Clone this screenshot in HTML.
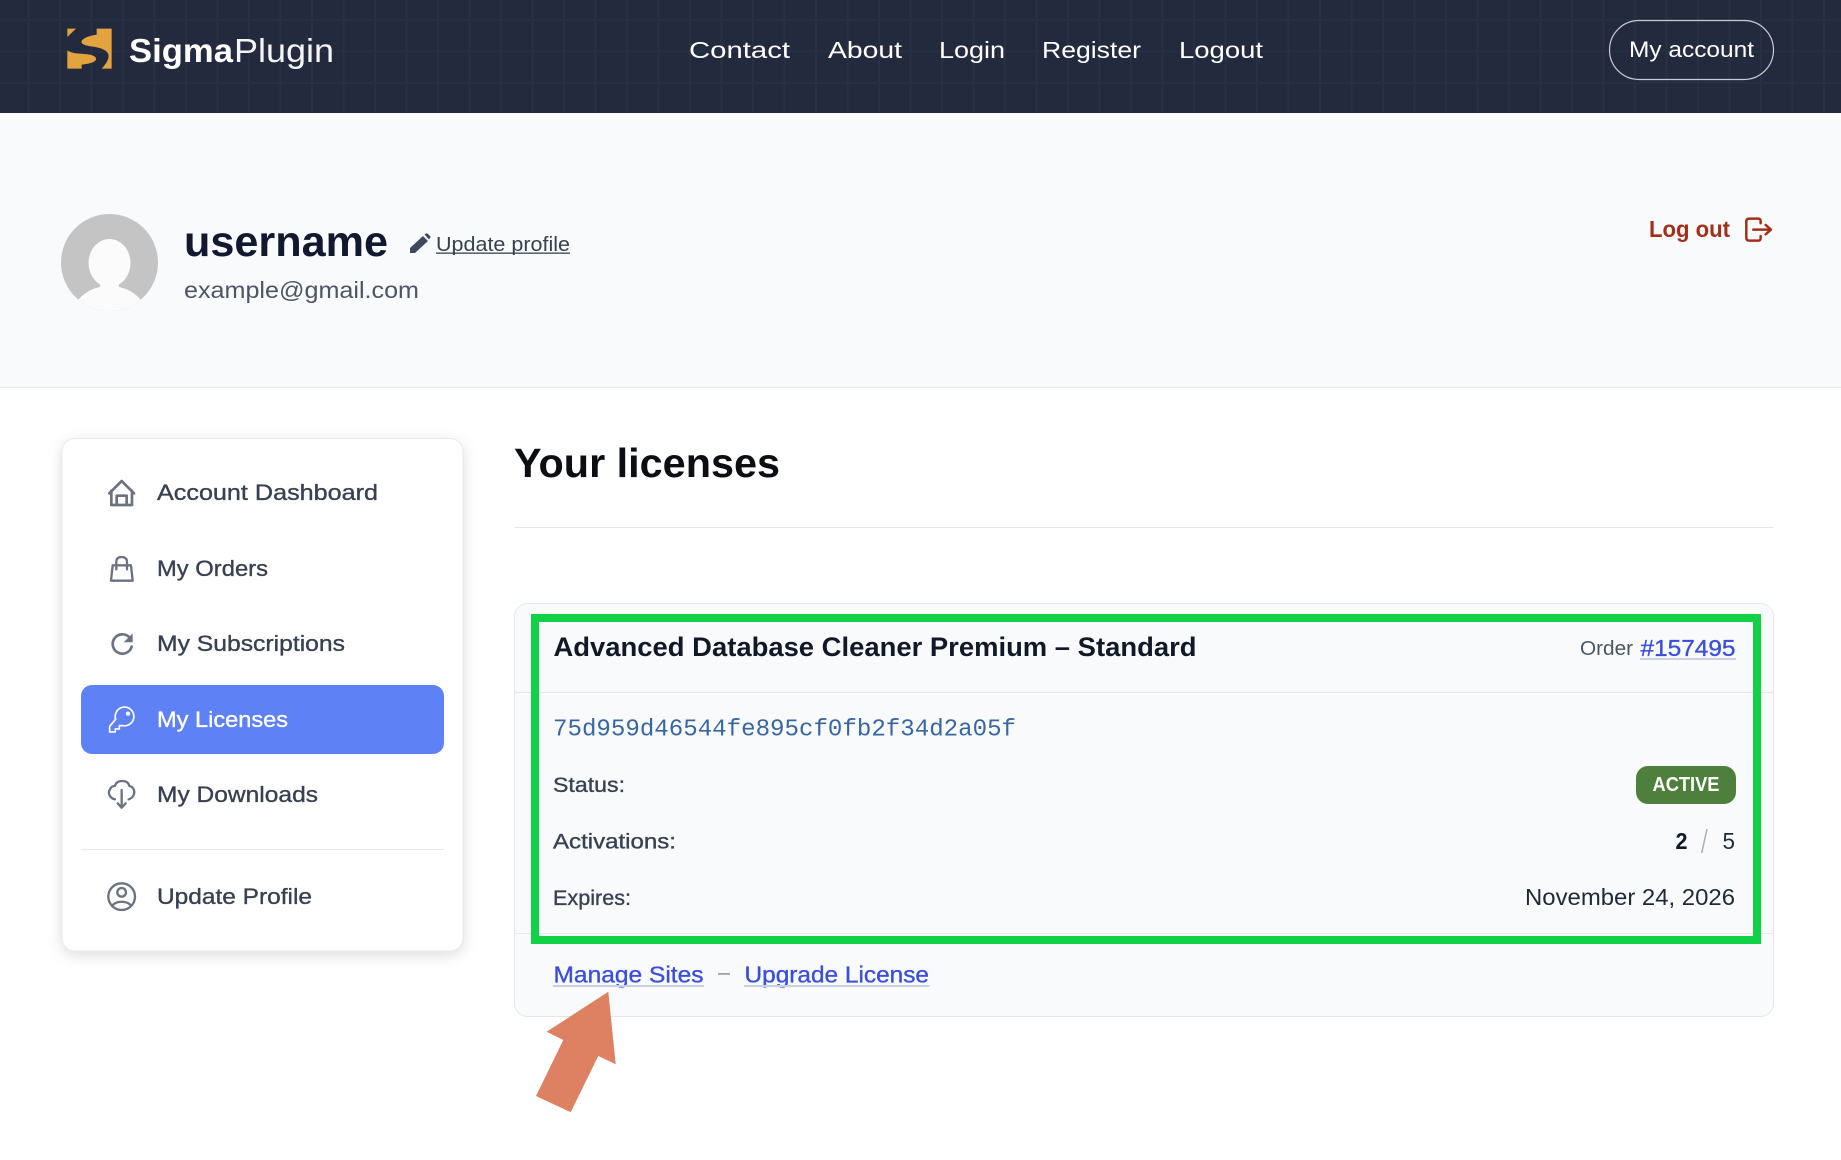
<!DOCTYPE html>
<html lang="en"><head><meta charset="utf-8"><title>Your licenses</title>
<style>
html,body{margin:0;padding:0;background:#fff;width:1841px;height:1160px;overflow:hidden}
svg{display:block}
text{font-family:"Liberation Sans",sans-serif;white-space:pre}
.m{stroke-width:.35;paint-order:stroke}
.mono{font-family:"Liberation Mono",monospace}
</style></head><body>
<svg xmlns="http://www.w3.org/2000/svg" width="1841" height="1160" viewBox="0 0 1841 1160">
<defs>
<pattern id="g" x="28.5" y="20" width="31.5" height="31.5" patternUnits="userSpaceOnUse">
<rect x="-1" y="0" width="2" height="31.5" fill="#293044"/><rect x="30.5" y="0" width="2" height="31.5" fill="#293044"/><rect x="0" y="-1" width="31.5" height="2" fill="#282f43"/><rect x="0" y="30.5" width="31.5" height="2" fill="#282f43"/>
</pattern>
<clipPath id="av"><circle cx="109.5" cy="262.5" r="48.5"/></clipPath>
</defs>
<rect width="1841" height="1160" fill="#fff"/>
<!-- header -->
<rect width="1841" height="113" fill="#242a3e"/>
<rect width="1841" height="113" fill="url(#g)"/>
<g transform="translate(60,22) scale(.3333)" fill="#e3a43f">
<path d="M110,20H155V140H125C140,124 150,106 144,94C134,76 100,75 78,70C62,66 60,58 72,50C84,42 100,40 110,38Z"/>
<path d="M22,85C38,97 70,94 90,98C108,102 114,112 102,119C90,125 76,127 65,128V140H22Z"/>
<path d="M22,20H48L22,45Z"/>
</g>
<text x="129" y="62" font-size="33" font-weight="700" fill="#fff" textLength="104" lengthAdjust="spacingAndGlyphs">Sigma</text>
<text x="234" y="62" font-size="33" fill="#f4f5f7" textLength="100" lengthAdjust="spacingAndGlyphs">Plugin</text>
<g font-size="23.500" fill="#fff">
<text x="689" y="58" textLength="101" lengthAdjust="spacingAndGlyphs">Contact</text>
<text x="828" y="58" textLength="74" lengthAdjust="spacingAndGlyphs">About</text>
<text x="939" y="58" textLength="66" lengthAdjust="spacingAndGlyphs">Login</text>
<text x="1042" y="58" textLength="99" lengthAdjust="spacingAndGlyphs">Register</text>
<text x="1179" y="58" textLength="84" lengthAdjust="spacingAndGlyphs">Logout</text>
</g>
<rect x="1609.5" y="20.5" width="164" height="59" rx="29.5" fill="none" stroke="#c9cbd2" stroke-width="1.2"/>
<text x="1629" y="57" font-size="22.500" fill="#fff" textLength="125" lengthAdjust="spacingAndGlyphs">My account</text>
<!-- hero -->
<rect y="113" width="1841" height="274" fill="#f9fafb"/>
<rect y="387" width="1841" height="1" fill="#e5e7eb"/>
<circle cx="109.5" cy="262.5" r="48.5" fill="#c4c4c4"/>
<g clip-path="url(#av)" fill="#fbfbfb">
<ellipse cx="109.5" cy="263" rx="21" ry="24"/>
<rect x="100" y="280" width="19" height="10"/>
<ellipse cx="109.5" cy="318" rx="38" ry="32"/>
</g>
<text x="184" y="256" font-size="43" font-weight="700" fill="#11182f" textLength="204" lengthAdjust="spacingAndGlyphs">username</text>
<path d="M410,253V248L423,236L428,241L415,253ZM424.500,234.500L426,233.500Q427,233 428,234L430,236Q431,237 430,238L429,239.500Z" fill="#414a5c"/>
<text x="436" y="251" font-size="20" fill="#374151" textLength="134" lengthAdjust="spacingAndGlyphs">Update profile</text>
<rect x="436" y="252.500" width="134" height="1.300" fill="#374151"/>
<text x="184" y="298" font-size="23" fill="#4b5563" textLength="235" lengthAdjust="spacingAndGlyphs">example@gmail.com</text>
<text x="1649" y="237" font-size="23" font-weight="700" fill="#a1301a" textLength="81" lengthAdjust="spacingAndGlyphs">Log out</text>
<g transform="translate(1500,0) scale(.3333)" fill="none" stroke="#a1301a" stroke-width="7.500" stroke-linecap="round" stroke-linejoin="round">
<path d="M782,670V664Q782,656 775,656H748Q739,656 739,665V713Q739,722 748,722H775Q782,722 782,714V708"/>
<path d="M760,689H812M797,675L813,689L797,703"/>
</g>
<!-- sidebar -->
<rect x="62" y="438.500" width="401" height="512.500" rx="13" fill="#fff" stroke="#e9eaed" stroke-width="1" style="filter:drop-shadow(0 4px 7px rgba(0,0,0,.13))"/>
<rect x="81" y="685" width="363" height="69" rx="11" fill="#5e82f6"/>
<rect x="81" y="849" width="363" height="1" fill="#e5e7eb"/>
<g font-size="22.500" fill="#374151" class="m" stroke="#374151">
<text x="157" y="500" textLength="221" lengthAdjust="spacingAndGlyphs">Account Dashboard</text>
<text x="157" y="576" textLength="111" lengthAdjust="spacingAndGlyphs">My Orders</text>
<text x="157" y="651" textLength="188" lengthAdjust="spacingAndGlyphs">My Subscriptions</text>
<text x="157" y="727" textLength="131" lengthAdjust="spacingAndGlyphs" fill="#fff" stroke="#fff">My Licenses</text>
<text x="157" y="802" textLength="161" lengthAdjust="spacingAndGlyphs">My Downloads</text>
<text x="157" y="904" textLength="155" lengthAdjust="spacingAndGlyphs">Update Profile</text>
</g>
<g transform="translate(50,430) scale(.3333)" fill="none" stroke="#6b7280" stroke-width="8" stroke-linecap="round" stroke-linejoin="round">
<path d="M178,190L215,153L252,190M184,182V225H246V182M200,225V197H230V225"/>
<path d="M183,452L188,406H243L248,452ZM199,418V396Q199,381 215,381Q231,381 231,396V418" stroke-width="7"/>
<path d="M238,622A29,29 0 1 0 245,650"/>
<path d="M248,610V637H221Z" fill="#6b7280" stroke="none"/>
<g stroke="#fff" stroke-width="5">
<path d="M197,868A28,28 0 1 1 219,887H208V897H196V906H179V889Z"/>
<circle cx="234" cy="851" r="4" fill="#fff"/>
</g>
</g>
<g transform="translate(50,700) scale(.3333)" fill="none" stroke="#6b7280" stroke-width="7" stroke-linecap="round" stroke-linejoin="round">
<path d="M195,298C180,295 172,280 180,268C183,260 190,258 195,258C198,245 208,243 217,243C230,243 236,250 238,258C250,260 255,272 252,282C250,290 243,296 236,298"/>
<path d="M215,270V322M203,310L215,323L227,310"/>
<circle cx="215" cy="590" r="40"/>
<circle cx="215" cy="577" r="13"/>
<path d="M187,618C195,601 235,601 243,618"/>
</g>
<!-- content -->
<text x="514" y="477" font-size="41" font-weight="700" fill="#0d0d14" textLength="266" lengthAdjust="spacingAndGlyphs">Your licenses</text>
<rect x="514" y="527" width="1260" height="1" fill="#e5e7eb"/>
<rect x="514.500" y="603.500" width="1259" height="413" rx="13" fill="#f9fafb" stroke="#e5e7eb"/>
<rect x="515" y="692" width="1258" height="1" fill="#e5e7eb"/>
<rect x="515" y="933" width="1258" height="1" fill="#e5e7eb"/>
<text x="553.500" y="656" font-size="26.500" font-weight="700" fill="#111827" textLength="643" lengthAdjust="spacingAndGlyphs">Advanced Database Cleaner Premium – Standard</text>
<text x="1580" y="655" font-size="20" fill="#4b5563" textLength="53" lengthAdjust="spacingAndGlyphs">Order</text>
<text x="1640.500" y="656" font-size="23" fill="#3b4fd8" class="m" stroke="#3b4fd8" textLength="95" lengthAdjust="spacingAndGlyphs">#157495</text>
<rect x="1640" y="658" width="96" height="2" fill="#c8d0e6"/>
<text class="mono" x="553" y="735.500" font-size="24" fill="#3a66a0" textLength="463" lengthAdjust="spacingAndGlyphs">75d959d46544fe895cf0fb2f34d2a05f</text>
<g font-size="21" fill="#374151" class="m" stroke="#374151">
<text x="553" y="792" textLength="72" lengthAdjust="spacingAndGlyphs">Status:</text>
<text x="553" y="848.500" textLength="123" lengthAdjust="spacingAndGlyphs">Activations:</text>
<text x="553" y="905" textLength="78" lengthAdjust="spacingAndGlyphs">Expires:</text>
</g>
<rect x="1636" y="766" width="100" height="38" rx="12" fill="#4e7f3d"/>
<text x="1652.500" y="791" font-size="20" font-weight="700" fill="#fff" textLength="67" lengthAdjust="spacingAndGlyphs">ACTIVE</text>
<text x="1675.500" y="849" font-size="23" font-weight="700" fill="#111827" textLength="12" lengthAdjust="spacingAndGlyphs">2</text>
<path d="M1701.700,853L1707,829" stroke="#a9aebb" stroke-width="1.500"/>
<text x="1722.500" y="849" font-size="23" fill="#1f2937" textLength="12.500" lengthAdjust="spacingAndGlyphs">5</text>
<text x="1525" y="905" font-size="23" fill="#1f2937" textLength="210" lengthAdjust="spacingAndGlyphs">November 24, 2026</text>
<g font-size="23" fill="#3b4fd8" class="m" stroke="#3b4fd8">
<text x="553.500" y="982.500" textLength="150" lengthAdjust="spacingAndGlyphs">Manage Sites</text>
<text x="744.500" y="982.500" textLength="184.500" lengthAdjust="spacingAndGlyphs">Upgrade License</text>
</g>
<rect x="553" y="985" width="151" height="2" fill="#c8d0e6"/>
<rect x="744" y="985" width="185.500" height="2" fill="#c8d0e6"/>
<rect x="718" y="973" width="12" height="1.800" fill="#9ca3af"/>
<!-- annotations -->
<path d="M531,614H1761V944H531ZM539,622V936H1753V622Z" fill="#11d247" fill-rule="evenodd"/>
<path d="M608.300,991.700L546.700,1031.700L563.300,1040L536,1096L570.700,1112.300L598.300,1056L615.700,1064.300Z" fill="#de8162"/>
</svg>
</body></html>
